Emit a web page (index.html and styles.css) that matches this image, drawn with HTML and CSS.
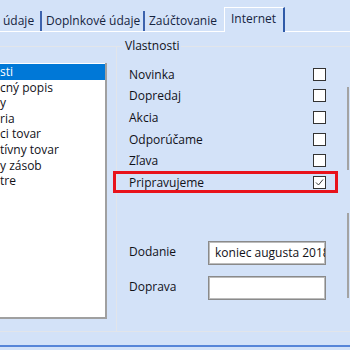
FILE: index.html
```html
<!DOCTYPE html>
<html lang="sk">
<head>
    <meta charset="UTF-8">
    <meta name="viewport" content="width=device-width, initial-scale=1.0">
    <title>Internet</title>
    <link rel="stylesheet" href="styles.css">
</head>
<body>
    <div class="tabs">
        <div class="tab tab-1">údaje</div>
        <div class="tab tab-2">Doplnkové údaje</div>
        <div class="tab tab-3">Zaúčtovanie</div>
        <div class="tab tab-4 active">Internet</div>
    </div>

    <div class="main">
        <div class="left-group">
            <ul class="list">
                <li class="selected">sti</li>
                <li>cný popis</li>
                <li>y</li>
                <li>ria</li>
                <li>ci tovar</li>
                <li>tívny tovar</li>
                <li>y zásob</li>
                <li>tre</li>
            </ul>
        </div>

        <fieldset class="props">
            <legend>Vlastnosti</legend>
            <div class="props-body">
                <div class="props-col">
                    <div class="checks">
                        <div class="check-row"><span>Novinka</span><span class="box"></span></div>
                        <div class="check-row"><span>Dopredaj</span><span class="box"></span></div>
                        <div class="check-row"><span>Akcia</span><span class="box"></span></div>
                        <div class="check-row"><span>Odporúčame</span><span class="box"></span></div>
                        <div class="check-row"><span>Zľava</span><span class="box"></span></div>
                        <div class="check-row marked">
                            <span>Pripravujeme</span>
                            <span class="box">
                                <svg width="11" height="11" viewBox="0 0 11 11"><polyline points="2,5.5 4.5,8 9,2.5" fill="none" stroke="#3a3a3a" stroke-width="1"/></svg>
                            </span>
                        </div>
                    </div>
                    <div class="fields">
                        <div class="field-row">
                            <label>Dodanie</label>
                            <input type="text" value="koniec augusta 2018">
                        </div>
                        <div class="field-row">
                            <label>Doprava</label>
                            <input type="text" value="">
                        </div>
                    </div>
                </div>
                <div class="edge">
                    <div class="edge-seg seg-1"></div>
                    <div class="edge-seg seg-2"></div>
                </div>
            </div>
        </fieldset>
    </div>

    <div class="footer-line"></div>
</body>
</html>
```

FILE: styles.css
```css
body {
    margin: 0;
    width: 350px;
    height: 350px;
    overflow: hidden;
    background-color: #d3e2f8;
    font-family: "Open Sans", "Noto Sans", sans-serif;
    font-size: 12px;
    color: #111118;
}

/* tab strip */
.tabs {
    display: flex;
    align-items: flex-end;
    height: 31px;
    border-bottom: 1px solid #fff;
}
.tab {
    box-sizing: border-box;
    height: 20px;
    line-height: 20px;
    white-space: nowrap;
    color: #16243f;
    border-right: 2px solid #3c62ad;
}
.tab-1 {
    width: 42px;
    padding-left: 3px;
}
.tab-2 {
    width: 103px;
    padding-left: 4px;
}
.tab-3 {
    width: 79px;
    padding-left: 4px;
    border-right: none;
}
.tab.active {
    width: 61px;
    height: 25px;
    line-height: 22px;
    margin-bottom: -1px;
    padding-left: 6px;
    background-color: #d3e2f8;
    border-top: 1px solid #fff;
    border-left: 1px solid #fff;
    border-right: 2px solid #2f5aa8;
}

/* content */
.main {
    display: flex;
    align-items: flex-start;
    height: 300px;
}
.left-group {
    box-sizing: border-box;
    width: 116px;
    height: 286px;
    margin-top: 14px;
    border-top: 1px solid #e2e5ea;
    border-bottom: 1px solid #e2e5ea;
    flex: none;
}
.list {
    box-sizing: border-box;
    list-style: none;
    margin: 16px 0 0;
    padding: 1px 0 0;
    width: 107px;
    height: 256px;
    background: #fff;
    border-right: 2px solid #a0a0a0;
    border-bottom: 2px solid #a0a0a0;
}
.list li {
    line-height: 15.6px;
    white-space: nowrap;
}
.list li.selected {
    background-color: #0078d7;
    color: #fff;
}

.props {
    box-sizing: border-box;
    flex: none;
    width: 250px;
    height: 294px;
    margin: 6px 0 0;
    padding: 0;
    min-width: 0;
    border: 1px solid #e2e5ea;
    border-right: none;
}
.props legend {
    margin-left: 6px;
    padding: 0 2px;
    line-height: 16px;
}
.props-body {
    display: flex;
    padding-top: 9.5px;
}
.props-col {
    width: 225px;
    margin-left: -4px;
}
.check-row {
    box-sizing: border-box;
    display: flex;
    align-items: center;
    justify-content: space-between;
    height: 21.6px;
    padding: 0 12px 0 16px;
}
.check-row.marked {
    outline: 3px solid #e8121b;
    outline-offset: -3px;
}
.box {
    box-sizing: border-box;
    display: flex;
    align-items: center;
    justify-content: center;
    width: 13px;
    height: 13px;
    background: #fff;
    border: 1px solid #333;
}

.fields {
    margin-top: 47.6px;
}
.field-row {
    display: flex;
    align-items: center;
    height: 24px;
}
.field-row + .field-row {
    margin-top: 11.5px;
}
.field-row label {
    width: 47px;
    padding-left: 16px;
    padding-bottom: 3px;
    margin-right: 32px;
    overflow: hidden;
    white-space: nowrap;
}
.field-row input {
    box-sizing: border-box;
    width: 118px;
    height: 24px;
    margin: 0;
    padding: 0 0 0 6px;
    font: inherit;
    color: #111118;
    background: #fff;
    border: 1px solid #8a8a8a;
    box-shadow: inset 0 0 0 1px #bcbcbc;
    outline: none;
}

.edge {
    width: 2px;
    margin-left: 9px;
}
.edge-seg {
    border-left: 2px solid #a3a3a3;
}
.seg-1 {
    margin-top: 23.5px;
    height: 83px;
}
.seg-2 {
    margin-top: 43px;
    height: 85px;
}

.footer-line {
    height: 2px;
    margin-top: 13px;
    background-color: #5685d8;
}
```
